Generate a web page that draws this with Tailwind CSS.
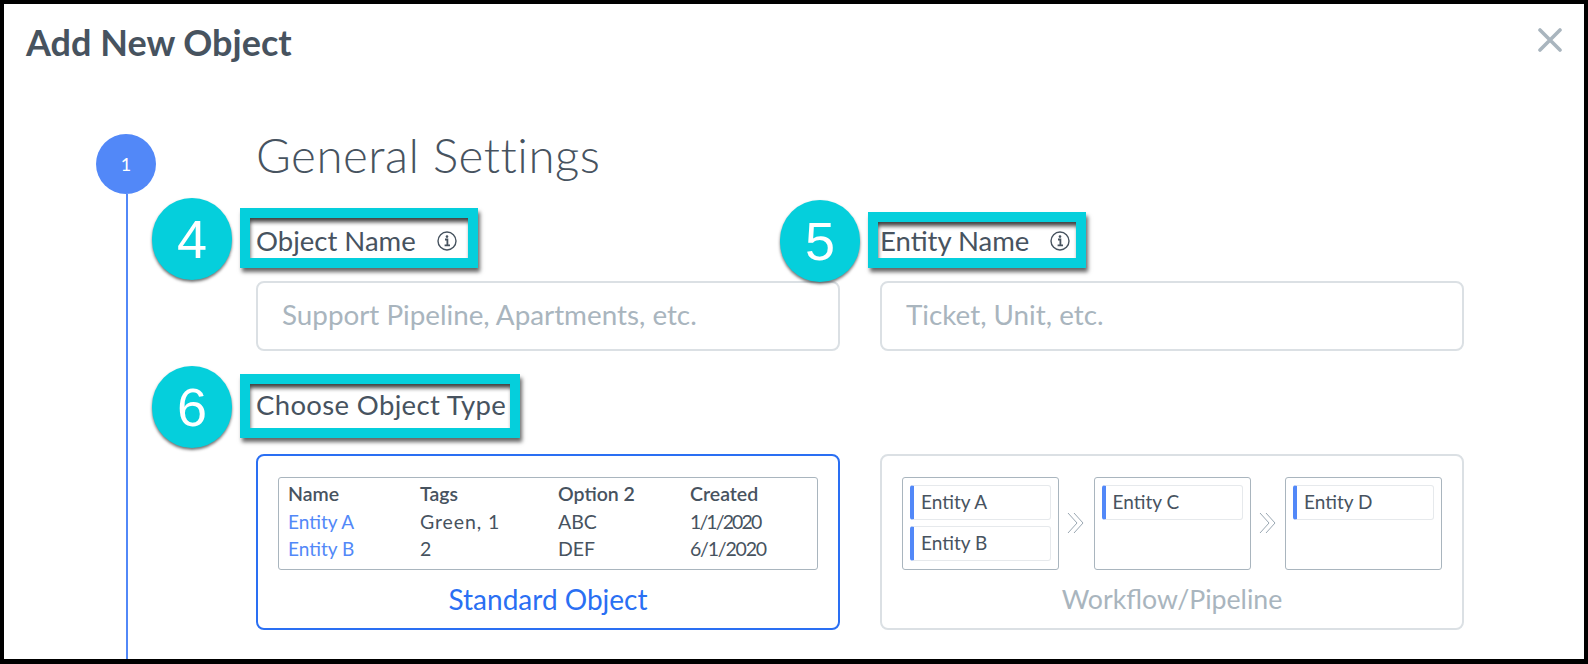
<!DOCTYPE html>
<html lang="en">
<head>
  <meta charset="UTF-8" />
  <title>Add New Object</title>
  <script src="https://cdn.jsdelivr.net/npm/@tailwindcss/browser@4"></script>
</head>
<body class="bg-black font-['Lato','Liberation_Sans',sans-serif] text-[#47535f]">
  <div class="relative w-[1580px] h-[655px] mt-[4px] ml-[4px] bg-white overflow-hidden">
    <!-- header -->
    <div class="flex items-center justify-between h-[75px] pl-[22px] pr-[22px]">
      <h1 class="text-[36px] font-bold leading-none">Add New Object</h1>
      <svg class="w-[24px] h-[24px] -mt-[3px]" viewBox="0 0 24 24" fill="none" stroke="#a9b5be" stroke-width="3.6" stroke-linecap="round"><path d="M2 2l20 20M22 2L2 22"/></svg>
    </div>

    <div class="flex pl-[92px] pt-[55px]">
      <!-- step rail -->
      <div class="flex flex-col items-center w-[60px] h-[530px] shrink-0">
        <div class="flex items-center justify-center w-[60px] h-[60px] rounded-full bg-[#5288f8] text-white text-[18px]">1</div>
        <div class="w-[2px] ml-[2px] grow bg-[#5288f8]"></div>
      </div>

      <!-- form -->
      <div class="ml-[100px] w-[1210px]">
        <h2 class="text-[47.5px] font-light leading-[42px] tracking-[0.5px]">General Settings</h2>

        <div class="grid grid-cols-[584px_584px] gap-x-[40px] mt-[47px]">
          <div>
            <label class="flex items-center gap-[21px] h-[36px] text-[27.5px]">Object Name
              <svg class="w-[20px] h-[20px]" viewBox="0 0 20 20" fill="none" stroke="#47535f"><circle cx="10" cy="10" r="9" stroke-width="1.4"/><path d="M8 8.5h2.4V14M7.6 14.4h5.4" stroke-width="1.8"/><circle cx="10" cy="5.6" r="1.3" fill="#47535f" stroke="none"/></svg>
            </label>
            <div class="flex items-center h-[70px] mt-[22px] pl-[24px] pb-[2px] border-2 border-[#dbe0e4] rounded-[8px] text-[27.8px] text-[#a9b5be]">Support Pipeline, Apartments, etc.</div>
          </div>
          <div>
            <label class="flex items-center gap-[21px] h-[36px] text-[27.5px]">Entity Name
              <svg class="w-[20px] h-[20px]" viewBox="0 0 20 20" fill="none" stroke="#47535f"><circle cx="10" cy="10" r="9" stroke-width="1.4"/><path d="M8 8.5h2.4V14M7.6 14.4h5.4" stroke-width="1.8"/><circle cx="10" cy="5.6" r="1.3" fill="#47535f" stroke="none"/></svg>
            </label>
            <div class="flex items-center h-[70px] mt-[22px] pl-[24px] pb-[2px] border-2 border-[#dbe0e4] rounded-[8px] text-[27.8px] text-[#a9b5be]">Ticket, Unit, etc.</div>
          </div>
        </div>

        <div class="h-[36px] mt-[36px] text-[27.5px] leading-[36px] tracking-[0.35px]">Choose Object Type</div>

        <div class="grid grid-cols-[584px_584px] gap-x-[40px] mt-[31px]">
          <!-- standard object -->
          <div class="h-[176px] px-[20px] pt-[21px] border-2 border-[#2a6ff3] rounded-[8px]">
            <div class="h-[93px] px-[9px] pt-[2px] border border-[#a9b5be] rounded-[3px] text-[19.5px] leading-[27.5px]">
              <div class="grid grid-cols-[132px_138px_132px_1fr] font-semibold">
                <span>Name</span><span>Tags</span><span>Option 2</span><span>Created</span>
              </div>
              <div class="grid grid-cols-[132px_138px_132px_1fr]">
                <span class="text-[19px] text-[#5288f8]">Entity A</span><span class="tracking-[0.9px]">Green, 1</span><span>ABC</span><span class="tracking-[-1.9px]">1/1/2020</span>
              </div>
              <div class="grid grid-cols-[132px_138px_132px_1fr]">
                <span class="text-[19px] text-[#5288f8]">Entity B</span><span>2</span><span>DEF</span><span class="tracking-[-1.2px]">6/1/2020</span>
              </div>
            </div>
            <div class="mt-[13px] text-center text-[28px] leading-[32px] text-[#2a6ff3]">Standard Object</div>
          </div>

          <!-- workflow -->
          <div class="h-[176px] px-[20px] pt-[21px] border-2 border-[#dbe0e4] rounded-[8px]">
            <div class="flex justify-between h-[93px]">
              <div class="flex flex-col gap-[6px] w-[157px] h-[93px] px-[7px] pt-[7px] border border-[#a9b5be] rounded-[3px]">
                <div class="flex items-center h-[35px] pl-[7px] border border-[#e6e9ec] border-l-4 border-l-[#5288f8] rounded-[3px] text-[19px]">Entity A</div>
                <div class="flex items-center h-[35px] pl-[7px] border border-[#e6e9ec] border-l-4 border-l-[#5288f8] rounded-[3px] text-[19px]">Entity B</div>
              </div>
              <svg class="w-[18px] h-[22px] self-center -mt-[2px]" viewBox="0 0 18 22" fill="none" stroke="#9aa7b2" stroke-width="1"><path d="M1 1l9 10-9 10M7 1l9 10-9 10"/></svg>
              <div class="w-[157px] h-[93px] px-[7px] pt-[7px] border border-[#a9b5be] rounded-[3px]">
                <div class="flex items-center h-[35px] pl-[7px] border border-[#e6e9ec] border-l-4 border-l-[#5288f8] rounded-[3px] text-[19px]">Entity C</div>
              </div>
              <svg class="w-[18px] h-[22px] self-center -mt-[2px]" viewBox="0 0 18 22" fill="none" stroke="#9aa7b2" stroke-width="1"><path d="M1 1l9 10-9 10M7 1l9 10-9 10"/></svg>
              <div class="w-[157px] h-[93px] px-[7px] pt-[7px] border border-[#a9b5be] rounded-[3px]">
                <div class="flex items-center h-[35px] pl-[7px] border border-[#e6e9ec] border-l-4 border-l-[#5288f8] rounded-[3px] text-[19px]">Entity D</div>
              </div>
            </div>
            <div class="mt-[13px] text-center text-[26.7px] leading-[32px] text-[#a9b5be]">Workflow/Pipeline</div>
          </div>
        </div>
      </div>
    </div>

    <!-- callouts painted over the form -->
    <div class="absolute left-[148px] top-[194px] flex items-center justify-center w-[80px] h-[82px] rounded-full bg-[#05cfdc] shadow-[0_2px_3px_rgba(0,0,0,0.55)] text-white text-[54px] font-['Liberation_Sans',sans-serif]">4</div>
    <div class="absolute left-[776px] top-[196px] flex items-center justify-center w-[80px] h-[82px] rounded-full bg-[#05cfdc] shadow-[0_2px_3px_rgba(0,0,0,0.55)] text-white text-[54px] font-['Liberation_Sans',sans-serif]">5</div>
    <div class="absolute left-[148px] top-[362px] flex items-center justify-center w-[80px] h-[82px] rounded-full bg-[#05cfdc] shadow-[0_2px_3px_rgba(0,0,0,0.55)] text-white text-[54px] font-['Liberation_Sans',sans-serif]">6</div>

    <div class="absolute left-[236px] top-[204px] w-[238px] h-[60px] border-[10px] border-[#05cfdc] shadow-[2px_4px_4px_rgba(0,0,0,0.6),inset_1px_5px_4px_-1px_rgba(0,0,0,0.75)]"></div>
    <div class="absolute left-[864px] top-[208px] w-[218px] h-[56px] border-[10px] border-[#05cfdc] shadow-[2px_4px_4px_rgba(0,0,0,0.6),inset_1px_5px_4px_-1px_rgba(0,0,0,0.75)]"></div>
    <div class="absolute left-[236px] top-[370px] w-[280px] h-[64px] border-[10px] border-[#05cfdc] shadow-[2px_4px_4px_rgba(0,0,0,0.6),inset_1px_5px_4px_-1px_rgba(0,0,0,0.75)]"></div>
  </div>
</body>
</html>
